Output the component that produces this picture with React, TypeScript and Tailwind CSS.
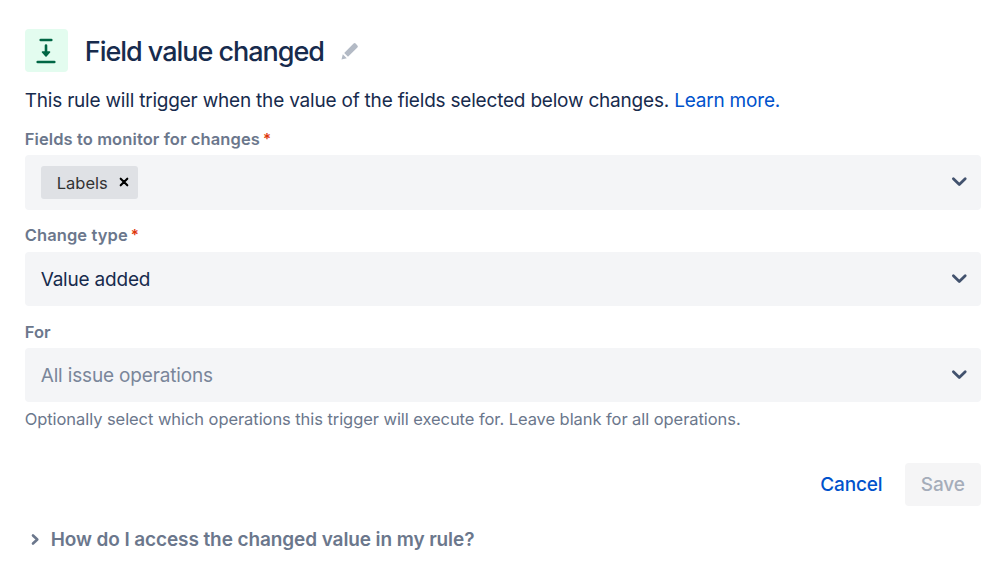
import type { ReactNode } from "react";

function Chevron() {
  return (
    <svg width="18" height="12" viewBox="0 0 18 12" fill="none" className="shrink-0">
      <path d="M3.400 2.800L9.300 8.500l5.900-5.700" stroke="#42526e" strokeWidth="2.8" strokeLinecap="round" strokeLinejoin="round" />
    </svg>
  );
}

function Field({ label, required, children }: { label: string; required?: boolean; children: ReactNode }) {
  return (
    <div>
      <div className="flex h-[22px] items-center text-[16.5px] font-semibold tracking-[0.1px] text-[#6b778c]">
        <span className="whitespace-nowrap">{label}</span>
        {required && <span className="ml-[3px] text-[15px] text-[#de350b]">*</span>}
      </div>
      <div className="mt-[5px] flex h-[54.4px] items-center justify-between rounded bg-[#f4f5f7] pr-[13px] pl-4">
        {children}
        <Chevron />
      </div>
    </div>
  );
}

export default function App() {
  return (
    <div className="h-[578px] w-[999px] overflow-hidden bg-white pt-[28.6px] pr-[18px] pl-[24.7px] font-['Inter',sans-serif] text-[#172b4d]">
      <div className="flex h-11 items-center">
        <div className="grid size-[43.6px] place-items-center rounded bg-[#e3fcef]">
          <svg width="22" height="28" viewBox="0 0 22 28" fill="none" stroke="#006644" strokeWidth="2.6" strokeLinecap="round">
            <path d="M5.700 3h10.600M2.700 25h16.600M11 8.500v7" />
            <path d="M7.500 15h7L11 19z" fill="#006644" strokeWidth="1.6" strokeLinejoin="round" />
          </svg>
        </div>
        <h1 className="ml-[16.500px] pt-[3px] text-[27px] font-medium tracking-[-1.03px] whitespace-nowrap">Field value changed</h1>
        <svg width="18" height="18" viewBox="0 0 18 18" className="ml-[17px]" fill="#b3bac5">
          <path d="M0.500 17.500l1.300-5.300 4 4zM3.200 11L12.600 1.600q1-1 2 0L16.400 3.400q1 1 0 2L7 14.800z" />
        </svg>
      </div>
      <p className="mt-[14.400px] h-7 text-[19px] leading-7 tracking-[-0.205px] whitespace-nowrap">
        This rule will trigger when the value of the fields selected below changes. <a className="text-[#0052cc]">Learn more.</a>
      </p>
      <div className="mt-[13.200px] flex flex-col gap-[15px]">
        <Field label="Fields to monitor for changes" required>
          <div className="flex h-[33px] w-[97px] items-center rounded-[3px] bg-[#dfe1e5] pl-4 text-[16.5px] text-[#333]">
            <span className="pt-[2px]">Labels</span>
            <svg width="10" height="10" viewBox="0 0 10 10" className="ml-[11px] shrink-0" stroke="#000" strokeWidth="2.1" strokeLinecap="round">
              <path d="M1.700 1.700l6.600 6.600M8.300 1.700L1.700 8.300" />
            </svg>
          </div>
        </Field>
        <Field label="Change type" required>
          <span className="pt-[3px] text-[19px] tracking-[-0.2px]">Value added</span>
        </Field>
        <Field label="For">
          <span className="pt-[3px] text-[19px] tracking-[-0.16px] text-[#7a869a]">All issue operations</span>
        </Field>
      </div>
      <p className="mt-[5px] text-[16.5px] leading-6 tracking-[-0.068px] whitespace-nowrap text-[#6b778c]">
        Optionally select which operations this trigger will execute for. Leave blank for all operations.
      </p>
      <div className="mt-[31.300px] flex h-[43.400px] items-center justify-end gap-[22px] text-[19px] font-medium tracking-[-0.15px]">
        <span className="pt-[2px] text-[#0052cc]">Cancel</span>
        <span className="flex h-full w-[76.500px] items-center justify-center rounded bg-[#f5f5f6] pt-[2px] text-[#a5adba]">Save</span>
      </div>
      <div className="mt-[20.300px] flex h-7 items-center text-[19px] font-semibold tracking-[-0.1px] whitespace-nowrap text-[#6b778c]">
        <svg width="12" height="14" viewBox="0 0 12 14" fill="none" className="mr-[10px] ml-1" stroke="#6b778c" strokeWidth="2.6" strokeLinecap="round" strokeLinejoin="round">
          <path d="M4 2.500l4.300 4L4 10.500" />
        </svg>
        How do I access the changed value in my rule?
      </div>
    </div>
  );
}
